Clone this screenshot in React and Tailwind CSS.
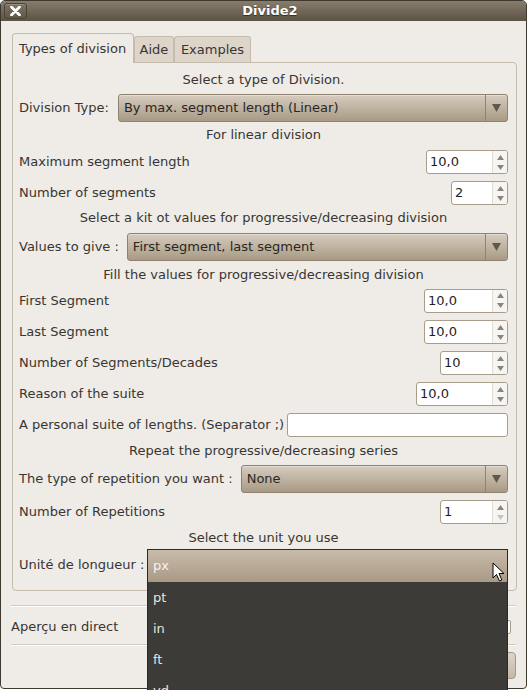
import React from "react";

function Tri({ up, light }) {
  return (
    <svg width="7" height="5" viewBox="0 0 7 5">
      {up ? (
        <polygon points="0,5 7,5 3.5,0" fill={light ? "#c9c3ba" : "#8a847b"} />
      ) : (
        <polygon points="0,0 7,0 3.5,5" fill={light ? "#c9c3ba" : "#8a847b"} />
      )}
    </svg>
  );
}

function Spin({ className, value, downLight }) {
  return (
    <div className={"flex h-[24px] rounded-[3px] border border-[#a89d8b] bg-white overflow-hidden " + className}>
      <div className="flex-1 flex items-center pl-[3px] text-[#1e1e1e]">{value}</div>
      <div className="w-[15px] flex flex-col bg-[#f7f5f1] border-l border-[#e2ddd4]">
        <div className="flex-1 flex items-center justify-center pt-[1px]">
          <Tri up />
        </div>
        <div className="flex-1 flex items-center justify-center pb-[1px]">
          <Tri light={downLight} />
        </div>
      </div>
    </div>
  );
}

function Combo({ text }) {
  return (
    <div className="flex-1 flex h-[28px] rounded-[3px] border border-[#8f826e] bg-gradient-to-b from-[#d6ccbe] to-[#a89a85] shadow-[inset_0_1px_0_rgba(255,255,255,0.35)]">
      <div className="flex-1 flex items-center pl-[5px] text-[#2a2723]">{text}</div>
      <div className="w-[22px] flex items-center justify-center border-l border-[#8f826e]">
        <svg width="9" height="8" viewBox="0 0 9 8">
          <polygon points="0,0 9,0 4.5,8" fill="#5f584e" />
        </svg>
      </div>
    </div>
  );
}

function Header({ text, h }) {
  return <div className={"flex items-center justify-center " + h}>{text}</div>;
}

function Row({ label, h, children }) {
  return (
    <div className={"flex items-center " + h}>
      <div className="whitespace-nowrap">{label}</div>
      {children}
    </div>
  );
}

export default function App() {
  return (
    <div className="w-[527px] h-[690px] bg-white relative overflow-hidden font-['DejaVu_Sans',sans-serif] text-[13px] text-[#383632]">
      <div className="w-[527px] h-[689px] border border-[#3e392f] rounded-t-[5px] rounded-b-[4px] bg-[#efebe7] flex flex-col overflow-hidden">
        {/* Title bar */}
        <div className="h-[20px] bg-gradient-to-b from-[#877d6c] to-[#5c5345] flex items-center relative shrink-0">
          <div className="absolute left-[3px] top-[2px] w-[23px] h-[16px] rounded-[3px] border border-[#4a4336] bg-gradient-to-b from-[#7d7463] to-[#5f5747] shadow-[inset_0_1px_0_rgba(255,255,255,0.2)] flex items-center justify-center">
            <svg width="11" height="10" viewBox="0 0 11 10">
              <path d="M1.5 1 L9.5 9 M9.5 1 L1.5 9" stroke="#ffffff" strokeWidth="2.8" strokeLinecap="round" />
            </svg>
          </div>
          <div className="flex-1 flex justify-center pl-[13px] text-white font-bold text-[13px] [text-shadow:0_1px_1px_#2e2920]">
            Divide2
          </div>
        </div>

        {/* Body */}
        <div className="flex flex-col pl-[11px] pt-[12px]">
          {/* Tabs */}
          <div className="flex items-end h-[29px]">
            <div className="h-[30px] w-[122px] border border-b-0 border-[#c6bcad] rounded-t-[4px] bg-[#efebe7] flex items-center pl-[6px] pt-[1px] relative z-10 -mb-[1px]">
              Types of division
            </div>
            <div className="h-[26px] w-[40px] border border-b-0 border-[#c6bcad] rounded-t-[3px] bg-[#ddd5c9] flex items-center justify-center">
              Aide
            </div>
            <div className="h-[26px] w-[77px] border border-b-0 border-[#c6bcad] rounded-t-[3px] bg-[#ddd5c9] flex items-center justify-center">
              Examples
            </div>
          </div>
          {/* Panel */}
          <div className="w-[505px] h-[529px] border border-[#c6bcad] rounded-b-[4px] rounded-tr-[4px] flex flex-col pl-[6px] pr-[8px] pt-[5px]">
            <Header text="Select a type of Division." h="h-[24px]" />
            <Row label="Division Type:" h="h-[32px] gap-[9px]">
              <Combo text="By max. segment length (Linear)" />
            </Row>
            <Header text="For linear division" h="h-[22px]" />
            <Row label="Maximum segment length" h="h-[32px] justify-between">
              <Spin className="w-[82px]" value="10,0" />
            </Row>
            <Row label="Number of segments" h="h-[30px] justify-between">
              <Spin className="w-[57px]" value="2" />
            </Row>
            <Header text="Select a kit ot values for progressive/decreasing division" h="h-[20px]" />
            <Row label="Values to give :" h="h-[38px] gap-[8px]">
              <Combo text="First segment, last segment" />
            </Row>
            <Header text="Fill the values for progressive/decreasing division" h="h-[17px]" />
            <Row label="First Segment" h="h-[35px] justify-between">
              <Spin className="w-[84px]" value="10,0" />
            </Row>
            <Row label="Last Segment" h="h-[28px] justify-between">
              <Spin className="w-[84px]" value="10,0" />
            </Row>
            <Row label="Number of Segments/Decades" h="h-[34px] justify-between">
              <Spin className="w-[68px]" value="10" />
            </Row>
            <Row label="Reason of the suite" h="h-[28px] justify-between">
              <Spin className="w-[92px]" value="10,0" />
            </Row>
            <Row label="A personal suite of lengths. (Separator ;)" h="h-[34px] justify-between">
              <div className="w-[221px] h-[24px] rounded-[3px] border border-[#a89d8b] bg-white" />
            </Row>
            <Header text="Repeat the progressive/decreasing series" h="h-[18px]" />
            <Row label="The type of repetition you want :" h="h-[38px] gap-[8px]">
              <Combo text="None" />
            </Row>
            <Row label="Number of Repetitions" h="h-[28px] justify-between">
              <Spin className="w-[68px]" value="1" downLight />
            </Row>
            <Header text="Select the unit you use" h="h-[24px]" />
            <Row label="Unité de longueur :" h="h-[30px] gap-[5px]">
              <Combo text="" />
            </Row>
          </div>
        </div>

        {/* Bottom area */}
        <div className="flex flex-col px-[10px] pt-[14px]">
          <div className="h-[1px] bg-[#d3cbbf] shadow-[0_1px_0_#ffffff]" />
          <div className="h-[38px] flex items-center justify-between pt-[3px]">
            <div>Aperçu en direct</div>
            <div className="w-[14px] h-[14px] mr-[5px] border border-[#a89d8b] rounded-[2px] bg-white" />
          </div>
          <div className="h-[1px] bg-[#d3cbbf] shadow-[0_1px_0_#ffffff]" />
          <div className="flex justify-end pt-[7px] pr-[0px]">
            <div className="w-[90px] h-[27px] rounded-[4px] border border-[#a59883] bg-gradient-to-b from-[#ddd5c9] to-[#c4b8a7]" />
          </div>
        </div>
      </div>

      {/* Dropdown popup */}
      <div className="absolute left-[147px] top-[549px] w-[361px] h-[160px] bg-[#3c3b37] border border-[#2a2926] flex flex-col">
        <div className="h-[32px] shrink-0 bg-gradient-to-b from-[#c8bba9] to-[#a99a86] flex items-center pl-[5px] text-[#f6f3ee]">
          px
        </div>
        <div className="h-[31px] shrink-0 flex items-center pl-[5px] text-[#e8e4dc]">pt</div>
        <div className="h-[31px] shrink-0 flex items-center pl-[5px] text-[#e8e4dc]">in</div>
        <div className="h-[31px] shrink-0 flex items-center pl-[5px] text-[#e8e4dc]">ft</div>
        <div className="h-[31px] shrink-0 flex items-center pl-[5px] text-[#e8e4dc]">yd</div>
      </div>

      {/* Mouse cursor */}
      <svg className="absolute left-[492px] top-[562px]" width="14" height="21" viewBox="0 0 14 21">
        <path d="M1 1 L1 16 L4.5 12.5 L7.5 19 L9.8 18 L7 11.5 L12 11.5 Z" fill="#ffffff" stroke="#000000" strokeWidth="1" strokeLinejoin="round" />
      </svg>
    </div>
  );
}
